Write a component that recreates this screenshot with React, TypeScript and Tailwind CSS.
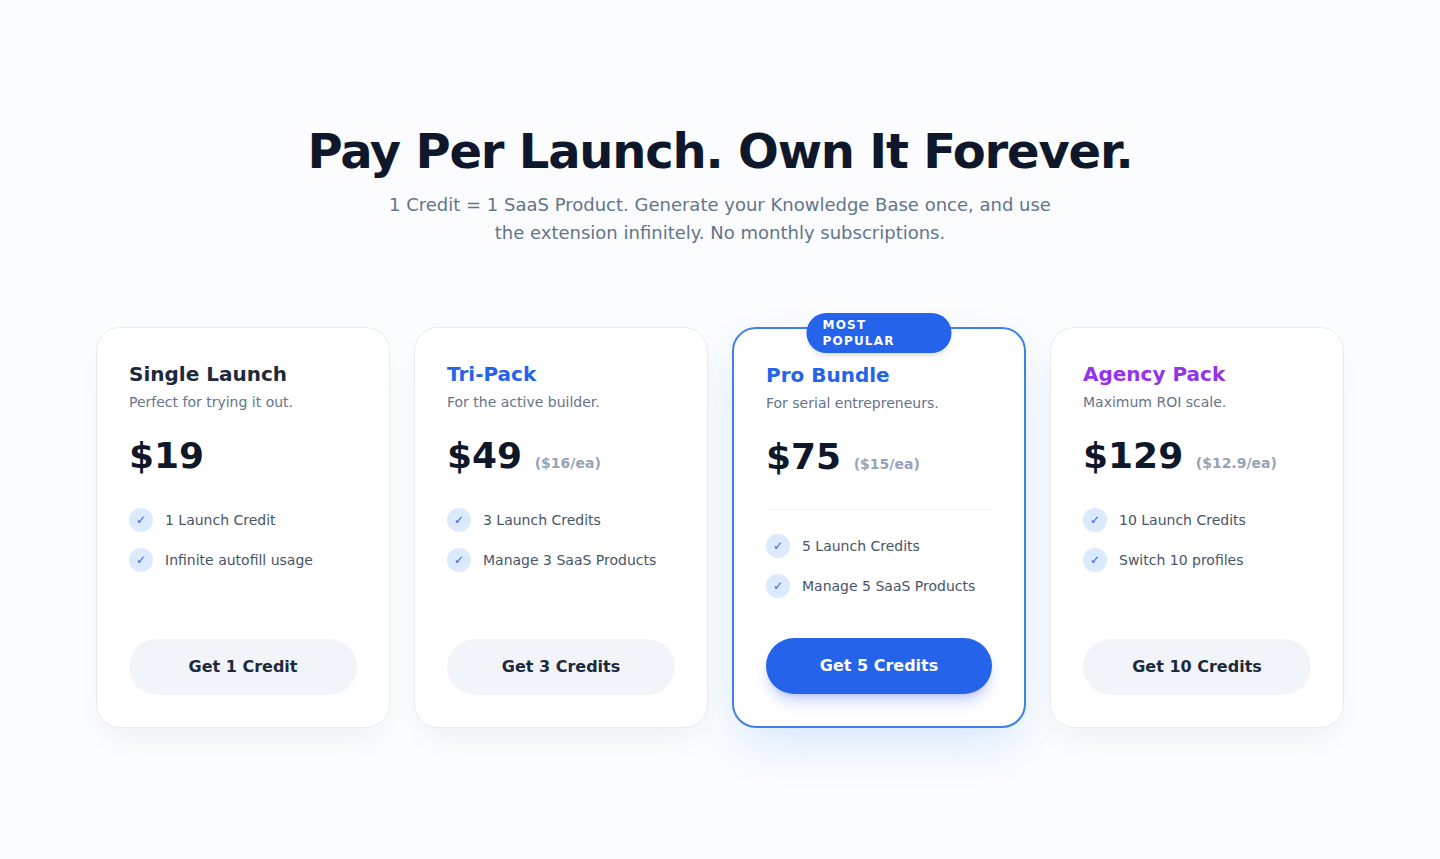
import clsx from "clsx";

type Plan = {
  name: string;
  tagline: string;
  price: string;
  each?: string;
  features: string[];
  cta: string;
  nameColor: string;
  popular?: boolean;
};

const plans: Plan[] = [
  {
    name: "Single Launch",
    tagline: "Perfect for trying it out.",
    price: "$19",
    features: ["1 Launch Credit", "Infinite autofill usage"],
    cta: "Get 1 Credit",
    nameColor: "text-[#1e293b]",
  },
  {
    name: "Tri-Pack",
    tagline: "For the active builder.",
    price: "$49",
    each: "($16/ea)",
    features: ["3 Launch Credits", "Manage 3 SaaS Products"],
    cta: "Get 3 Credits",
    nameColor: "text-[#2563eb]",
  },
  {
    name: "Pro Bundle",
    tagline: "For serial entrepreneurs.",
    price: "$75",
    each: "($15/ea)",
    features: ["5 Launch Credits", "Manage 5 SaaS Products"],
    cta: "Get 5 Credits",
    nameColor: "text-[#2563eb]",
    popular: true,
  },
  {
    name: "Agency Pack",
    tagline: "Maximum ROI scale.",
    price: "$129",
    each: "($12.9/ea)",
    features: ["10 Launch Credits", "Switch 10 profiles"],
    cta: "Get 10 Credits",
    nameColor: "text-[#9333ea]",
  },
];

const PlanCard = ({ plan }: { plan: Plan }) => {
  return (
    <article
      className={clsx(
        "relative flex flex-col rounded-3xl bg-white p-8",
        plan.popular
          ? "border-2 border-[#3f82e6] shadow-[0_20px_50px_-12px_rgba(59,130,246,0.22)]"
          : "border border-[#e8edf2] shadow-[0_16px_36px_-12px_rgba(15,40,50,0.07)]"
      )}
    >
      {plan.popular && (
        <span className="absolute -top-4 left-1/2 -translate-x-1/2 rounded-full bg-[#2563eb] px-4 py-1 text-xs font-bold uppercase tracking-widest text-white shadow-md">
          Most Popular
        </span>
      )}
      <h3 className={clsx("mb-1 text-xl leading-7 font-bold", plan.nameColor)}>{plan.name}</h3>
      <p className="mb-6 text-sm text-[#64748b]">{plan.tagline}</p>
      <div className="mb-8 text-4xl font-extrabold text-[#0f172a]">
        {plan.price}{" "}
        {plan.each && <span className="text-sm font-bold text-[#94a3b8]">{plan.each}</span>}
      </div>
      <ul
        className={clsx(
          "mb-10 flex flex-1 flex-col gap-4",
          plan.popular && "border-t border-[#f1f5f9] pt-6"
        )}
      >
        {plan.features.map((feature) => (
          <li key={feature} className="flex items-center gap-3 text-sm text-[#475569]">
            <span className="flex h-6 w-6 shrink-0 items-center justify-center rounded-full bg-[#dbeafe] text-xs text-[#2563eb]">
              ✓
            </span>
            {feature}
          </li>
        ))}
      </ul>
      <button
        type="button"
        className={clsx(
          "w-full rounded-full py-4 text-base font-bold",
          plan.popular
            ? "bg-[#2563eb] text-white shadow-lg shadow-[#4f6ff6]/30"
            : "bg-[#f1f5f9] text-[#1e293b]"
        )}
      >
        {plan.cta}
      </button>
    </article>
  );
};

const App = () => {
  return (
    <main className="min-h-screen bg-[#fafcfe] py-[127px] font-['DejaVu_Sans',sans-serif]">
      <div className="mx-auto max-w-7xl px-4">
        <header className="mb-20 text-center">
          <h1 className="mb-4 text-5xl font-extrabold tracking-tight text-[#0f172a]">
            Pay Per Launch. Own It Forever.
          </h1>
          <p className="mx-auto max-w-2xl text-lg leading-7 text-[#64748b]">
            1 Credit = 1 SaaS Product. Generate your Knowledge Base once, and use the extension
            infinitely. No monthly subscriptions.
          </p>
        </header>
        <div className="grid gap-6 md:grid-cols-2 lg:grid-cols-4">
          {plans.map((plan) => (
            <PlanCard key={plan.name} plan={plan} />
          ))}
        </div>
      </div>
    </main>
  );
};

export default App;
